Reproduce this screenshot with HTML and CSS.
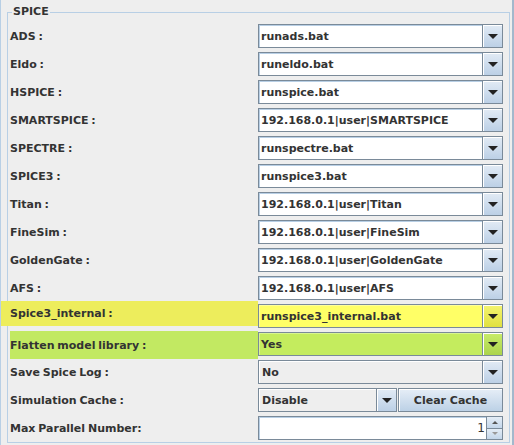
FILE: index.html
```html
<!DOCTYPE html>
<html>
<head>
<meta charset="utf-8">
<link rel="stylesheet" href="styles.css">
</head>
<body>
<div class="pane">
  <div class="group">
    <span class="group-title">SPICE</span>
    <div class="form">
      <div class="row"><span class="label">ADS :</span><div class="combo editable"><span class="field">runads.bat</span><span class="arrow"><i class="tri"></i></span></div></div>
      <div class="row"><span class="label">Eldo :</span><div class="combo editable"><span class="field">runeldo.bat</span><span class="arrow"><i class="tri"></i></span></div></div>
      <div class="row"><span class="label">HSPICE :</span><div class="combo editable"><span class="field">runspice.bat</span><span class="arrow"><i class="tri"></i></span></div></div>
      <div class="row"><span class="label">SMARTSPICE :</span><div class="combo editable"><span class="field">192.168.0.1|user|SMARTSPICE</span><span class="arrow"><i class="tri"></i></span></div></div>
      <div class="row"><span class="label">SPECTRE :</span><div class="combo editable"><span class="field">runspectre.bat</span><span class="arrow"><i class="tri"></i></span></div></div>
      <div class="row"><span class="label">SPICE3 :</span><div class="combo editable"><span class="field">runspice3.bat</span><span class="arrow"><i class="tri"></i></span></div></div>
      <div class="row"><span class="label">Titan :</span><div class="combo editable"><span class="field">192.168.0.1|user|Titan</span><span class="arrow"><i class="tri"></i></span></div></div>
      <div class="row"><span class="label">FineSim :</span><div class="combo editable"><span class="field">192.168.0.1|user|FineSim</span><span class="arrow"><i class="tri"></i></span></div></div>
      <div class="row"><span class="label">GoldenGate :</span><div class="combo editable"><span class="field">192.168.0.1|user|GoldenGate</span><span class="arrow"><i class="tri"></i></span></div></div>
      <div class="row"><span class="label">AFS :</span><div class="combo editable"><span class="field">192.168.0.1|user|AFS</span><span class="arrow"><i class="tri"></i></span></div></div>
      <div class="row hl-yellow"><span class="label">Spice3_internal :</span><div class="combo editable"><span class="field">runspice3_internal.bat</span><span class="arrow"><i class="tri"></i></span></div></div>
      <div class="row hl-green"><span class="label">Flatten model library :</span><div class="combo editable"><span class="field">Yes</span><span class="arrow"><i class="tri"></i></span></div></div>
      <div class="row"><span class="label">Save Spice Log :</span><div class="combo plain"><span class="field">No</span><span class="arrow"><i class="tri"></i></span></div></div>
      <div class="row"><span class="label">Simulation Cache :</span><div class="split"><div class="combo plain short"><span class="field">Disable</span><span class="arrow"><i class="tri"></i></span></div><button class="btn">Clear Cache</button></div></div>
      <div class="row"><span class="label">Max Parallel Number:</span><div class="spinner"><span class="field num">1</span><span class="spin"><span class="up"><i class="tri-up"></i></span><span class="down"><i class="tri-dn"></i></span></span></div></div>
    </div>
  </div>
</div>
</body>
</html>
```
FILE: styles.css
```css
* { box-sizing: border-box; }
html, body { margin: 0; padding: 0; }
body {
  width: 514px;
  height: 445px;
  overflow: hidden;
  background: #eeeeee;
  font-family: "DejaVu Sans", sans-serif;
  font-weight: bold;
  font-size: 11px;
  color: #333333;
}
.pane {
  height: 445px;
  border-left: 1px solid #b8cfe5;
  border-right: 2px solid #a3b8cc;
  padding: 12px 2px 0 6px;
}
.group {
  position: relative;
  border: 1px solid #b8cfe5;
  height: 431px;
  padding: 11px 3px 0 2px;
}
.group-title {
  position: absolute;
  top: -8px;
  left: 4px;
  padding: 0 1px;
  background: #eeeeee;
  line-height: 14px;
}
.form {
  display: flex;
  flex-direction: column;
  gap: 4px;
}
.row {
  display: grid;
  grid-template-columns: 248px 245px;
  height: 24px;
  align-items: stretch;
}
.label {
  display: flex;
  align-items: center;
  word-spacing: -1px;
}
.combo {
  display: flex;
  border: 1px solid #7a8a99;
  height: 24px;
}
.combo .field {
  flex: 1;
  display: flex;
  align-items: center;
  padding-left: 2px;
  background: #ffffff;
  box-shadow: inset 1px 1px 0 #b8cfe5;
  white-space: nowrap;
  overflow: hidden;
}
.combo .arrow {
  width: 20px;
  display: flex;
  align-items: center;
  justify-content: center;
  border-left: 1px solid #7a8a99;
  background: linear-gradient(#e2ebf5, #bcd0e6);
  box-shadow: inset 1px 1px 0 #ffffff;
}
.tri {
  width: 0;
  height: 0;
  border-left: 5px solid transparent;
  border-right: 5px solid transparent;
  border-top: 5px solid #222222;
  border-bottom: 0;
  margin-top: 1px;
}
.combo.plain .field {
  background: #eeeeee;
  box-shadow: inset 1px 1px 0 #ffffff;
  padding-left: 3px;
}
.split {
  display: flex;
}
.combo.short {
  width: 139px;
}
.btn {
  flex: 1;
  margin: 0;
  font: inherit;
  color: #333333;
  border: 1px solid #7a8a99;
  background: linear-gradient(#e6eef7, #bcd1e6);
  box-shadow: inset 1px 1px 0 #ffffff;
  padding: 0;
  margin-left: 1px;
}
.spinner {
  display: flex;
  height: 24px;
}
.spinner .field {
  flex: 1;
  background: #ffffff;
  border: 1px solid #7a8a99;
  box-shadow: inset 1px 1px 0 #b8cfe5;
  display: flex;
  align-items: center;
  justify-content: flex-end;
  padding-right: 1px;
  font-weight: normal;
  font-size: 12px;
}
.spin {
  width: 16px;
  display: flex;
  flex-direction: column;
}
.spin .up, .spin .down {
  flex: 1;
  display: flex;
  align-items: center;
  justify-content: center;
  border: 1px solid #7a8a99;
  border-left: 0;
  background: linear-gradient(#e4edf6, #c3d6ea);
}
.spin .down { border-top: 0; }
.tri-up {
  width: 0; height: 0;
  border-left: 3px solid transparent;
  border-right: 3px solid transparent;
  border-bottom: 3px solid #555555;
}
.tri-dn {
  width: 0; height: 0;
  border-left: 3px solid transparent;
  border-right: 3px solid transparent;
  border-top: 3px solid #999999;
}
.hl-yellow .label {
  background: #eded5c;
  margin-left: -9px;
  padding-left: 9px;
  margin-top: -3px;
  margin-bottom: 2px;
}
.hl-yellow .combo .field { background: #ffff66; box-shadow: inset 1px 1px 0 #ffff99; }
.hl-yellow .combo .arrow { background: linear-gradient(#f4f470, #e0e040); }
.hl-green .label {
  background: #c2e962;
  margin-top: -1px;
  margin-bottom: -3px;
}
.hl-green .combo .field { background: #c4ec5e; box-shadow: inset 1px 1px 0 #d8f590; }
.hl-green .combo .arrow { background: linear-gradient(#c8ec6a, #acd44c); }
```
